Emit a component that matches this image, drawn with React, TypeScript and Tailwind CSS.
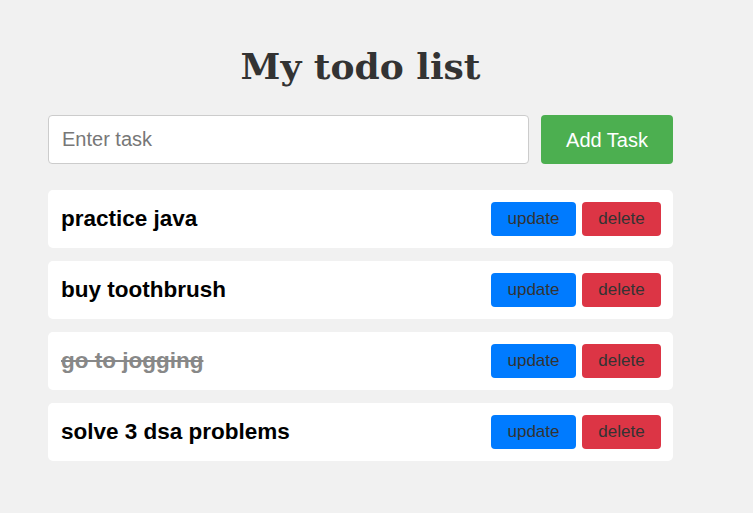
import { useState } from "react";

type Task = { id: number; text: string; done: boolean };

export default function App() {
  const [tasks, setTasks] = useState<Task[]>([
    { id: 1, text: "practice java", done: false },
    { id: 2, text: "buy toothbrush", done: false },
    { id: 3, text: "go to jogging", done: true },
    { id: 4, text: "solve 3 dsa problems", done: false },
  ]);
  const [input, setInput] = useState("");

  const addTask = () => {
    const text = input.trim();
    if (!text) return;
    setTasks([...tasks, { id: Date.now(), text, done: false }]);
    setInput("");
  };

  return (
    <main className="min-h-[513px] bg-[#f1f1f1] font-['Liberation_Sans',Arial,sans-serif]">
      <div className="ml-[48px] w-[625px] pt-[42px]">
        <h1 className="text-center font-['DejaVu_Serif',Georgia,serif] text-[36px] font-bold leading-[48px] text-[#333]">
          My todo list
        </h1>

        {/* Input row */}
        <div className="mt-[25px] flex gap-[12px]">
          <input
            type="text"
            placeholder="Enter task"
            value={input}
            onChange={(e) => setInput(e.target.value)}
            onKeyDown={(e) => e.key === "Enter" && addTask()}
            className="h-[49px] flex-1 rounded-[4px] border border-[#ccc] bg-white px-[13px] text-[20px] text-[#333] placeholder-[#777] outline-none"
          />
          <button
            onClick={addTask}
            className="h-[49px] w-[132px] rounded-[4px] bg-[#4caf50] text-[20px] text-white"
          >
            Add Task
          </button>
        </div>

        {/* Task list */}
        <ul className="mt-[26px] flex flex-col gap-[13px]">
          {tasks.map((t) => (
            <li
              key={t.id}
              className="flex h-[58px] items-center justify-between rounded-[5px] bg-white pl-[13px] pr-[12px]"
            >
              <span
                onClick={() =>
                  setTasks(tasks.map((x) => (x.id === t.id ? { ...x, done: !x.done } : x)))
                }
                className={
                  t.done
                    ? "cursor-pointer text-[22.5px] font-bold text-[#888] line-through"
                    : "cursor-pointer text-[22.5px] font-bold text-black"
                }
              >
                {t.text}
              </span>
              <div className="flex gap-[6px]">
                <button className="h-[34px] w-[85px] rounded-[4px] bg-[#007bff] text-[17px] text-[#333]">
                  update
                </button>
                <button
                  onClick={() => setTasks(tasks.filter((x) => x.id !== t.id))}
                  className="h-[34px] w-[79px] rounded-[4px] bg-[#dc3545] text-[17px] text-[#333]"
                >
                  delete
                </button>
              </div>
            </li>
          ))}
        </ul>
      </div>
    </main>
  );
}
